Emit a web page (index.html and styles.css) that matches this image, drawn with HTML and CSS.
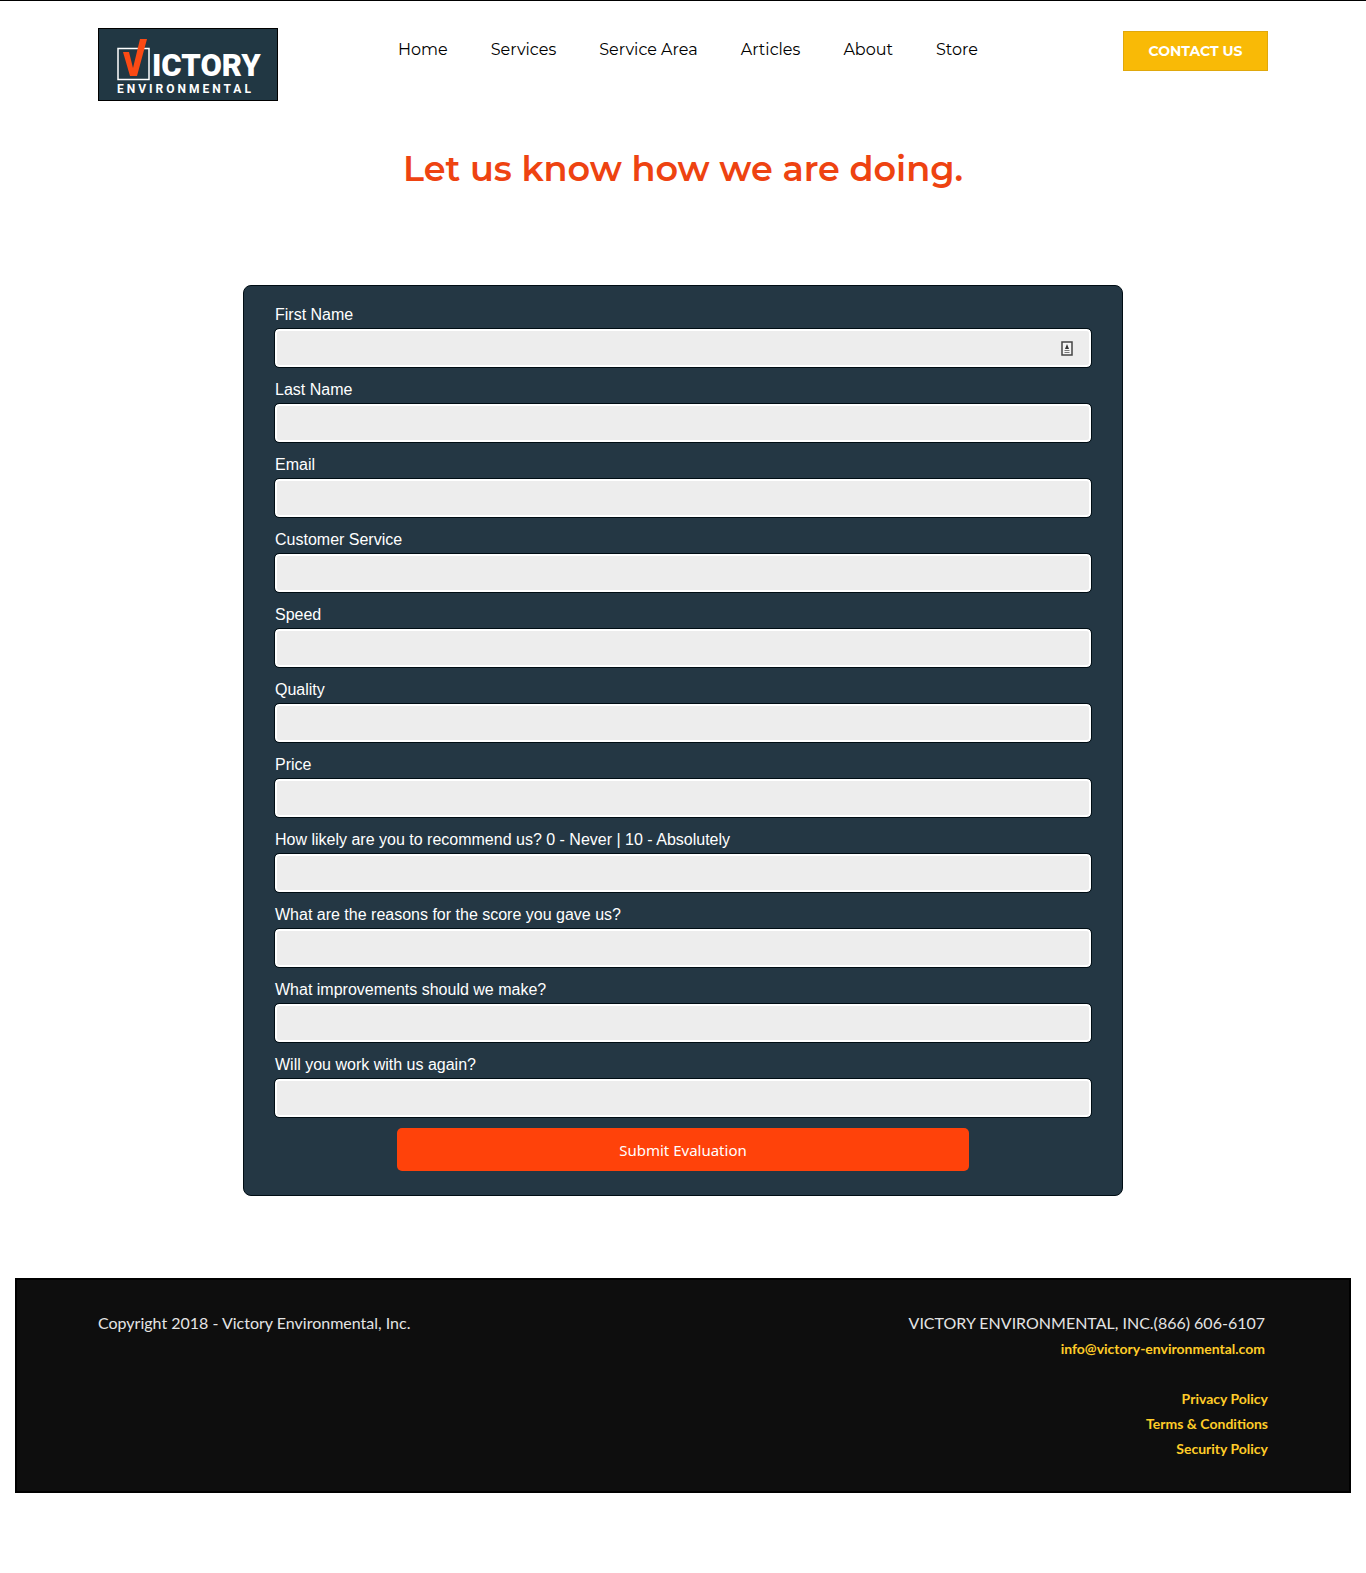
FILE: index.html
```html
<!DOCTYPE html>
<html lang="en">
<head>
<meta charset="utf-8">
<meta name="viewport" content="width=device-width, initial-scale=1">
<title>Victory Environmental - Evaluation</title>
<link rel="stylesheet" href="styles.css">
</head>
<body>
<header class="container header">
  <a class="logo" href="#" aria-label="Victory Environmental">
    <svg width="180" height="73" viewBox="0 0 180 73">
      <rect x="0.5" y="0.5" width="179" height="72" fill="#213743" stroke="#000"/>
      <rect x="20" y="20.500" width="31" height="31" fill="none" stroke="#fff" stroke-width="1.500"/>
      <path d="M25 24h6l4 16 7-29h7l-10 37h-7z" fill="#fb4a14"/>
      <text class="logo-name" x="54" y="48">ICTORY</text>
      <text class="logo-sub" x="19" y="65">ENVIRONMENTAL</text>
    </svg>
  </a>
  <nav class="nav">
    <a href="#">Home</a>
    <a href="#">Services</a>
    <a href="#">Service Area</a>
    <a href="#">Articles</a>
    <a href="#">About</a>
    <a href="#">Store</a>
  </nav>
  <button class="contact" type="button">CONTACT US</button>
</header>
<main>
  <h1 class="title">Let us know how we are doing.</h1>
  <form class="panel">
    <div class="field">
      <label for="first">First Name</label>
      <div class="control">
        <input id="first" type="text">
        <svg class="autofill" width="14" height="16" viewBox="0 0 14 16">
          <rect x="2" y="1" width="10" height="13" fill="#f4f4f4" stroke="#444" stroke-width="1.500"/>
          <path d="M7 3l2 5H5z" fill="#333"/>
          <path d="M4.500 9.500h5M4.500 11.500h5" stroke="#777"/>
        </svg>
      </div>
    </div>
    <div class="field"><label for="last">Last Name</label><input id="last" type="text"></div>
    <div class="field"><label for="email">Email</label><input id="email" type="email"></div>
    <div class="field"><label for="service">Customer Service</label><input id="service" type="text"></div>
    <div class="field"><label for="speed">Speed</label><input id="speed" type="text"></div>
    <div class="field"><label for="quality">Quality</label><input id="quality" type="text"></div>
    <div class="field"><label for="price">Price</label><input id="price" type="text"></div>
    <div class="field"><label for="recommend">How likely are you to recommend us? 0 - Never | 10 - Absolutely</label><input id="recommend" type="text"></div>
    <div class="field"><label for="reasons">What are the reasons for the score you gave us?</label><input id="reasons" type="text"></div>
    <div class="field"><label for="improve">What improvements should we make?</label><input id="improve" type="text"></div>
    <div class="field"><label for="again">Will you work with us again?</label><input id="again" type="text"></div>
    <button class="submit" type="submit">Submit Evaluation</button>
  </form>
</main>
<footer class="footer">
  <div class="container footer-row">
    <p>Copyright 2018 - Victory Environmental, Inc.</p>
    <div class="footer-right">
      <div class="company">
        <p>VICTORY ENVIRONMENTAL, INC.(866) 606-6107</p>
        <a href="#">info@victory-environmental.com</a>
      </div>
      <a href="#">Privacy Policy</a>
      <a href="#">Terms &amp; Conditions</a>
      <a href="#">Security Policy</a>
    </div>
  </div>
</footer>
</body>
</html>
```
FILE: styles.css
```css
* { box-sizing: border-box; }

body {
  margin: 0;
  padding-bottom: 80px;
  border-top: 1px solid #000;
  background: #fff;
  font-family: "Liberation Sans", Arial, sans-serif;
  font-size: 16px;
}

p { margin: 0; }
a { text-decoration: none; }

.container {
  width: 100%;
  max-width: 1170px;
  margin: 0 auto;
}

.header {
  display: flex;
  align-items: flex-start;
  justify-content: space-between;
  padding-top: 27px;
}

.logo, .logo svg { display: block; }

.logo-name {
  fill: #fff;
  font: 900 31px Roboto, sans-serif;
}

.logo-sub {
  fill: #fff;
  font: 700 12px Roboto, sans-serif;
  letter-spacing: 3px;
}

.nav {
  display: flex;
  justify-content: space-between;
  flex: 0 1 580px;
  margin-left: -25px;
  padding-top: 10px;
  font-family: Montserrat, "Open Sans", sans-serif;
  font-weight: 400;
  line-height: 24px;
}

.nav a { color: #000; white-space: nowrap; }

.contact {
  width: 145px;
  height: 40px;
  margin-top: 3px;
  padding: 0;
  border: 1px solid #e0a80c;
  background: #f9ba06;
  color: #fff;
  font: 700 14px Montserrat, Inter, sans-serif;
}

.title {
  margin: 44px 0 92px;
  color: #ee4311;
  text-align: center;
  font: 600 35px/48px Montserrat, Inter, sans-serif;
}

.panel {
  display: flex;
  flex-direction: column;
  width: 100%;
  max-width: 880px;
  margin: 0 auto;
  padding: 15px 31px 24px;
  border: 1px solid #000d14;
  border-radius: 8px;
  background: #243744;
}

.field { padding-bottom: 9px; }

.field label {
  display: block;
  height: 28px;
  color: #fff;
  line-height: 27px;
}

.field input {
  display: block;
  width: 100%;
  height: 38px;
  padding: 0 36px 0 10px;
  border: 2px solid #fff;
  border-radius: 4px;
  outline: 1px solid #000d14;
  outline-offset: 0;
  background: #ededed;
  font: inherit;
}

.control { position: relative; }

.autofill {
  position: absolute;
  top: 12px;
  right: 17px;
}

.submit {
  align-self: center;
  width: 70%;
  height: 43px;
  margin-top: 2px;
  border: 0;
  border-radius: 5px;
  background: #ff420a;
  color: #fff;
  font: 15px "Noto Sans", sans-serif;
}

.footer {
  margin: 82px 15px 0;
  padding: 30px 0;
  border: 2px solid #000;
  background: #0e0e0e;
  color: #e4e4e4;
  font-family: Lato, sans-serif;
  line-height: 25px;
}

.footer-row {
  display: flex;
  justify-content: space-between;
}

.footer-right {
  display: flex;
  flex-direction: column;
  align-items: flex-end;
}

.company {
  padding-right: 3px;
  margin-bottom: 25px;
  text-align: right;
}

.footer a {
  color: #ffcc28;
  font-size: 14px;
  font-weight: 700;
}

@media (max-width: 1000px) {
  .header, .footer-row { flex-wrap: wrap; gap: 16px; }
  .nav { margin-left: 0; }
}
```
